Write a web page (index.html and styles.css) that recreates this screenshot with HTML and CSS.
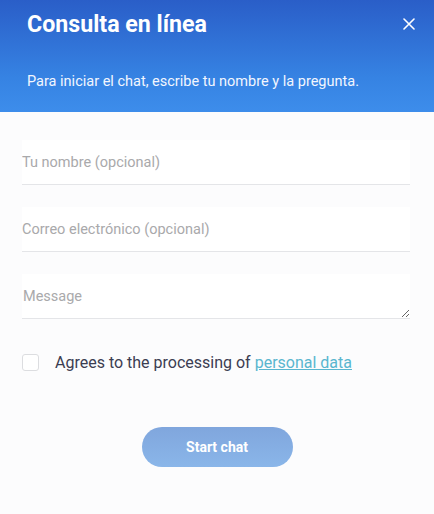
FILE: index.html
```html
<!DOCTYPE html>
<html lang="es">
<head>
    <meta charset="UTF-8">
    <title>Consulta en línea</title>
    <link rel="stylesheet" href="styles.css">
</head>
<body>
    <div class="chat-form">
        <div class="chat-header">
            <div class="header-top">
                <h2>Consulta en línea</h2>
                <button class="close-btn" aria-label="Cerrar">
                    <svg width="12" height="12" viewBox="0 0 12 12">
                        <path d="M1 1L11 11M11 1L1 11" stroke="#fff" stroke-width="1.6" stroke-linecap="round"/>
                    </svg>
                </button>
            </div>
            <p class="header-note">Para iniciar el chat, escribe tu nombre y la pregunta.</p>
        </div>

        <div class="form-body">
            <input class="field" type="text" placeholder="Tu nombre (opcional)">
            <input class="field" type="email" placeholder="Correo electrónico (opcional)">
            <textarea class="field message" placeholder="Message"></textarea>

            <label class="consent">
                <span class="check-box"></span>
                <span>Agrees to the processing of <a href="#">personal data</a></span>
            </label>

            <div class="actions">
                <button class="start-btn">Start chat</button>
            </div>
        </div>
    </div>
</body>
</html>
```

FILE: styles.css
```css
* {
    box-sizing: border-box;
    margin: 0;
    padding: 0;
}

body {
    font-family: Roboto, 'Liberation Sans', sans-serif;
    background-color: #fcfcfd;
    width: 434px;
    height: 514px;
    overflow: hidden;
}

.chat-header {
    height: 112px;
    padding: 9px 19px 0 27px;
    background: linear-gradient(180deg, #2a5ec8 0%, #3683e3 70%, #3d8deb 100%);
    color: white;
}

.header-top {
    display: flex;
    justify-content: space-between;
    align-items: center;
    height: 30px;
}

.header-top h2 {
    font-size: 23.2px;
    font-weight: 700;
}

.close-btn {
    background: none;
    border: none;
    width: 12px;
    height: 12px;
    display: flex;
    cursor: pointer;
}

.header-note {
    margin-top: 34px;
    font-size: 14.5px;
    color: #f2f6fe;
}

.form-body {
    display: flex;
    flex-direction: column;
    padding: 28px 24px 0 22px;
}

.field {
    display: block;
    width: 100%;
    height: 45px;
    border: none;
    border-bottom: 1px solid #e4e5e8;
    background-color: white;
    font-family: inherit;
    font-size: 14.5px;
    color: #333;
    padding: 0;
    outline: none;
    margin-bottom: 22px;
}

.field::placeholder {
    color: #a9a9ab;
}

.field.message {
    height: 45px;
    padding: 14px 1px 0;
    resize: vertical;
    margin-bottom: 34px;
}

.consent {
    display: flex;
    align-items: center;
    gap: 16px;
    font-size: 16px;
    color: #3b3d52;
    cursor: pointer;
}

.check-box {
    width: 17px;
    height: 17px;
    border: 1px solid #dcdde0;
    border-radius: 3px;
    background-color: white;
}

.consent a {
    color: #59b6cf;
}

.actions {
    display: flex;
    justify-content: center;
    margin-top: 55px;
}

.start-btn {
    width: 151px;
    height: 40px;
    border: none;
    border-radius: 20px;
    background: linear-gradient(180deg, #80a6dd 0%, #8ab6e9 100%);
    color: white;
    font-family: inherit;
    font-size: 14px;
    font-weight: 700;
    cursor: pointer;
    margin-left: 2px;
}
```
